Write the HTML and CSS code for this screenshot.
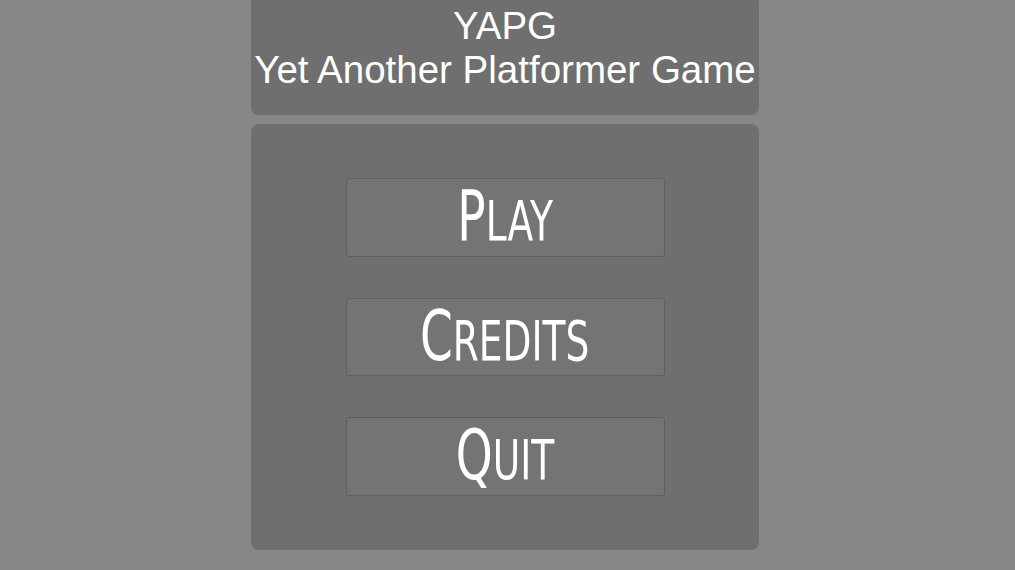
FILE: index.html
```html
<!DOCTYPE html>
<html lang="en">
<head>
    <meta charset="UTF-8">
    <title>YAPG</title>
    <link rel="stylesheet" href="styles.css">
</head>
<body>
    <div class="menu">
        <div class="title-card">
            <div class="title">YAPG</div>
            <div class="subtitle">Yet Another Platformer Game</div>
        </div>

        <div class="button-panel">
            <button class="menu-button"><span class="label"><span class="big">P</span>lay</span></button>
            <button class="menu-button"><span class="label"><span class="big">C</span>redits</span></button>
            <button class="menu-button"><span class="label"><span class="big">Q</span>uit</span></button>
        </div>
    </div>
</body>
</html>
```

FILE: styles.css
```css
* {
    margin: 0;
    padding: 0;
    box-sizing: border-box;
}

body {
    background-color: #878787;
    font-family: "Liberation Sans", Arial, sans-serif;
    color: #fff;
    height: 570px;
    overflow: hidden;
}

.menu {
    width: 508px;
    margin-left: 251px;
    display: flex;
    flex-direction: column;
    gap: 9px;
}

.title-card {
    height: 120px;
    margin-top: -5px;
    background-color: #6f6f6f;
    border-radius: 8px;
    text-align: center;
    padding-top: 9px;
    font-size: 38.5px;
    line-height: 44px;
}

.button-panel {
    height: 426px;
    background-color: #6f6f6f;
    border-radius: 8px;
    display: flex;
    flex-direction: column;
    align-items: center;
    padding-top: 54px;
    gap: 41px;
}

.menu-button {
    width: 319px;
    height: 78.5px;
    background-color: #747474;
    border: 1px solid #5f5f5f;
    border-radius: 3px;
    color: #fff;
    display: flex;
    align-items: center;
    justify-content: center;
    cursor: pointer;
}

.label {
    font-family: "DejaVu Sans Condensed", "Liberation Sans", sans-serif;
    font-stretch: condensed;
    font-size: 56px;
    text-transform: uppercase;
    line-height: 1;
    display: inline-block;
    transform: scaleX(0.745);
    margin-top: -2px;
}

.label .big {
    font-size: 70px;
}
```
